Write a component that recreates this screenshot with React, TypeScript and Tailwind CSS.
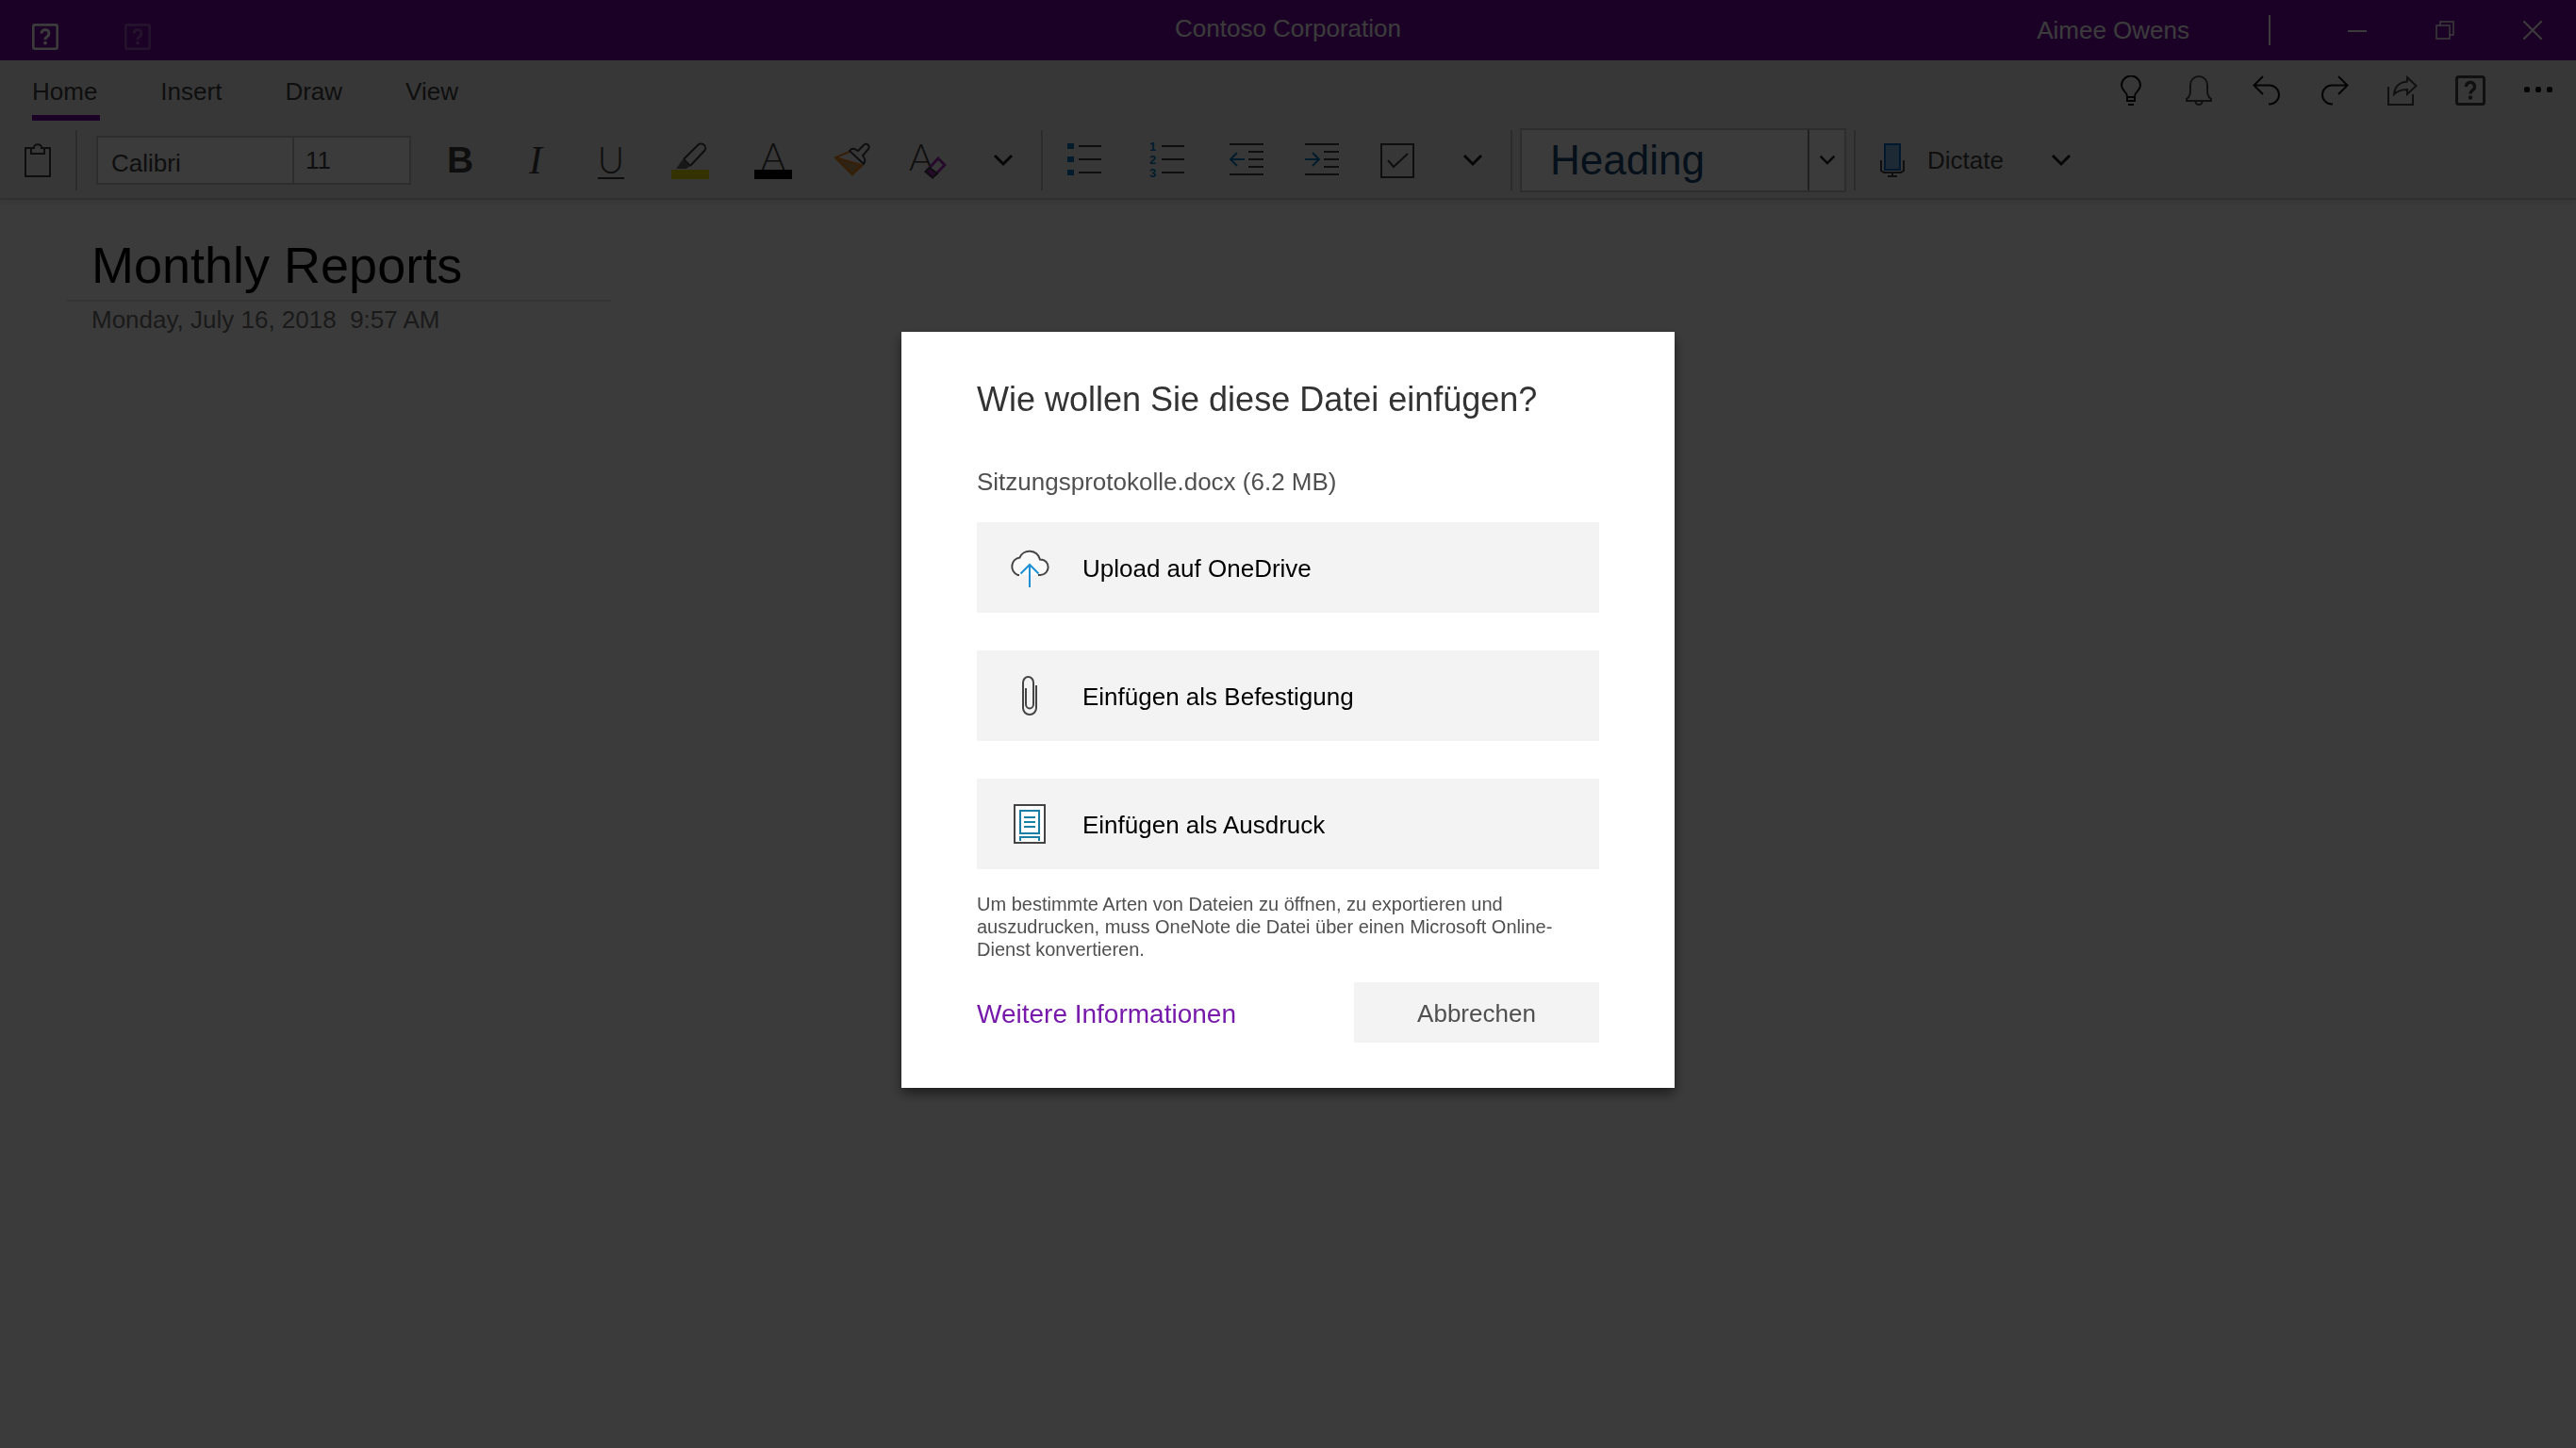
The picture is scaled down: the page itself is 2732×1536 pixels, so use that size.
import React from "react";

type SvgProps = { className?: string };

const stroke = {
  fill: "none",
  stroke: "currentColor",
  strokeWidth: 2,
} as const;

function HelpIcon({ className = "size-8" }: SvgProps) {
  return (
    <svg viewBox="0 0 32 32" className={className} aria-hidden="true">
      <rect x="1.5" y="1.5" width="29" height="29" rx="2" {...stroke} strokeWidth="3" />
      <path d="M11.5 12a4.5 4.5 0 1 1 7 3.6c-1.8 1.2-2.5 2-2.5 4" {...stroke} strokeWidth="3.4" />
      <circle cx="16" cy="23.5" r="2.2" fill="currentColor" />
    </svg>
  );
}

function Chevron({ className = "w-[22px]" }: SvgProps) {
  return (
    <svg viewBox="0 0 22 14" className={`text-[#1c1c1c] ${className}`} aria-hidden="true">
      <path d="M2 2l9 9 9-9" {...stroke} strokeWidth="3" />
    </svg>
  );
}

function ActionIcon({ children }: { children: React.ReactNode }) {
  return (
    <svg viewBox="0 0 32 32" className="size-8" aria-hidden="true" {...stroke}>
      {children}
    </svg>
  );
}

function ToolIcon({ children }: { children: React.ReactNode }) {
  return (
    <svg viewBox="0 0 40 40" className="size-10 overflow-visible" aria-hidden="true" {...stroke}>
      {children}
    </svg>
  );
}

function Divider() {
  return <div className="h-16 w-[2px] shrink-0 bg-[#bcbcbc]" />;
}

function Tool({ label, wide, children }: { label: string; wide?: boolean; children: React.ReactNode }) {
  return (
    <button
      type="button"
      aria-label={label}
      className={`flex h-16 shrink-0 items-center justify-center text-[#3c3c3c] ${wide ? "w-[88px]" : "w-20"}`}
    >
      {children}
    </button>
  );
}

function TitleBar() {
  return (
    <header className="grid h-16 grid-cols-[1fr_auto_1fr] items-center bg-[#7508a6] text-[26px] leading-8 text-white">
      <div className="flex gap-[70px] pt-[13px] pl-[34px]">
        <button type="button" aria-label="Help">
          <HelpIcon className="size-7" />
        </button>
        <button type="button" aria-label="Support" className="opacity-30" disabled>
          <HelpIcon className="size-7" />
        </button>
      </div>
      <h1 className="pb-1">Contoso Corporation</h1>
      <div className="flex items-center justify-end pr-9">
        <span className="pr-[84px]">Aimee Owens</span>
        <div className="h-8 w-[2px] bg-white" />
        <div className="flex gap-[73px] pl-[82px]">
          <button type="button" aria-label="Minimize">
            <svg viewBox="0 0 20 20" className="size-5" {...stroke}>
              <path d="M0 11h20" />
            </svg>
          </button>
          <button type="button" aria-label="Restore">
            <svg viewBox="0 0 20 20" className="size-5" {...stroke}>
              <path d="M1 5h14v14H1zM5 5V1h14v14h-4" strokeWidth="1.5" />
            </svg>
          </button>
          <button type="button" aria-label="Close">
            <svg viewBox="0 0 20 20" className="size-5" {...stroke}>
              <path d="M0 0l20 20M20 0L0 20" />
            </svg>
          </button>
        </div>
      </div>
    </header>
  );
}

const tabs = ["Home", "Insert", "Draw", "View"];

const actions: { label: string; icon: React.ReactNode; soft?: boolean }[] = [
  {
    label: "Tell me",
    icon: (
      <ActionIcon>
        <path d="M12 22c0-4.500-6-5.500-6-11.500a10 10 0 0 1 20 0c0 6-6 7-6 11.500v5h-8zM12 23h8M13 31h6" />
      </ActionIcon>
    ),
  },
  {
    label: "Notifications",
    soft: true,
    icon: (
      <ActionIcon>
        <path d="M3 27v-2c3-2 4-4 4-9v-6a9 9 0 0 1 18 0v6c0 5 1 7 4 9v2zM12.500 28a3.500 3 0 0 0 7 0" />
      </ActionIcon>
    ),
  },
  {
    label: "Undo",
    icon: (
      <ActionIcon>
        <path d="M12 1l-9.500 9.500L12 20M3 10.500h16a10 10 0 0 1 0 20h-1" />
      </ActionIcon>
    ),
  },
  {
    label: "Redo",
    icon: (
      <ActionIcon>
        <path d="M20 1l9.500 9.500L20 20M29 10.500H13a10 10 0 0 0 0 20h1" />
      </ActionIcon>
    ),
  },
  {
    label: "Share",
    soft: true,
    icon: (
      <ActionIcon>
        <path d="M1 12v19h26V20M7 20C8 11 14 7 21 6.500V2l9.500 9L21 20v-5c-6 0-10 1-14 5z" />
      </ActionIcon>
    ),
  },
  { label: "Help", soft: true, icon: <HelpIcon /> },
  {
    label: "More",
    icon: (
      <svg viewBox="0 0 32 32" className="size-8" aria-hidden="true" fill="currentColor">
        <rect x="1" y="12" width="6" height="6" rx="2" />
        <rect x="13" y="12" width="6" height="6" rx="2" />
        <rect x="25" y="12" width="6" height="6" rx="2" />
      </svg>
    ),
  },
];

function TabRow() {
  return (
    <div className="flex h-16 justify-between">
      <nav className="flex gap-16 pl-[34px] text-[26px] text-[#404040]">
        {tabs.map((tab) => (
          <button
            key={tab}
            type="button"
            className={`border-b-6 pt-2 pr-[3px] ${tab === "Home" ? "border-[#7508a6]" : "border-transparent"}`}
          >
            {tab}
          </button>
        ))}
      </nav>
      <div className="flex items-center pr-1">
        {actions.map((a) => (
          <button
            key={a.label}
            type="button"
            aria-label={a.label}
            className={`flex w-[72px] justify-center ${a.soft ? "text-[#484848]" : "text-[#141414]"}`}
          >
            {a.icon}
          </button>
        ))}
      </div>
    </div>
  );
}

function Toolbar() {
  return (
    <div className="flex h-[84px] items-center shadow-[inset_0_-2px_0_#cecece,0_4px_6px_rgba(0,0,0,0.08)]">
      <button type="button" aria-label="Paste" className="px-[26px] text-[#3c3c3c]">
        <svg viewBox="0 0 28 36" className="h-9 w-7" {...stroke}>
          <path d="M7 5H1v30h26V5h-6M7 5v6h14V5h-3c0-5-8-5-8 0z" />
        </svg>
      </button>
      <Divider />
      <div className="ml-5 flex h-13 w-[334px] shrink-0 border-2 border-[#c4c4c4] bg-white text-[26px] text-[#404040]">
        <input
          aria-label="Font"
          defaultValue="Calibri"
          className="w-[208px] border-r-2 border-[#c4c4c4] pt-[6px] pl-[14px] outline-none"
        />
        <input aria-label="Font size" defaultValue="11" className="w-[122px] pl-3 outline-none" />
      </div>
      <div className="w-3" />

      <Tool label="Bold">
        <span className="text-[39px] leading-10 font-bold">B</span>
      </Tool>
      <Tool label="Italic">
        <span className="font-['Liberation_Serif'] text-[42px] leading-10 italic">I</span>
      </Tool>
      <Tool label="Underline">
        <span className="border-b-2 border-current font-[Lato] text-[39px] leading-[38px] font-light">U</span>
      </Tool>
      <Tool label="Highlight" wide>
        <ToolIcon>
          <path d="M13 19L28 4a4.500 4.500 0 0 1 7 6L20 26M13 19l7 7" />
          <path d="M12 19l8 7-4 3H5z" fill="#6a6a6a" stroke="none" />
          <path d="M0 30h40v10H0z" fill="#e2dc00" stroke="none" />
        </ToolIcon>
      </Tool>
      <Tool label="Font color" wide>
        <span className="flex w-10 flex-col items-center border-b-10 border-black font-[Lato] text-[39px] leading-[30px] font-light">
          A
        </span>
      </Tool>
      <Tool label="Format painter">
        <ToolIcon>
          <path d="M17 11L2 17l18 18 11-10" stroke="#e8801f" />
          <path d="M2 17l27 8-9 10z" fill="#c79a5c" stroke="#e8801f" />
          <path d="M17 10q3-4 7-1l2 1 6-6a3 3 0 0 1 5 4l-6 7q4 5 1 9z" />
        </ToolIcon>
      </Tool>
      <Tool label="Clear formatting">
        <span className="relative flex size-10 font-[Lato] text-[39px] leading-8 font-light">
          A
          <svg viewBox="0 0 24 24" className="absolute right-0 bottom-0 size-6" {...stroke}>
            <path d="M15 2l7 7L9 22l-7-6z" stroke="#a02bb8" strokeWidth="3" />
            <path d="M6 12l8 6-5 4-7-6z" fill="#a02bb8" />
          </svg>
        </span>
      </Tool>
      <Tool label="More text formatting">
        <Chevron />
      </Tool>
      <Divider />
      <Tool label="Bulleted list" wide>
        <ToolIcon>
          <path d="M2 5h7M2 19h7M2 33h7" stroke="#0b78bd" strokeWidth="6" />
          <path d="M14 5h24M14 19h24M14 33h24" />
        </ToolIcon>
      </Tool>
      <Tool label="Numbered list" wide>
        <ToolIcon>
          <g fill="#0b78bd" stroke="none" fontFamily="Liberation Sans, sans-serif" fontSize="13" fontWeight="700">
            <text x="1" y="10">1</text>
            <text x="1" y="24">2</text>
            <text x="1" y="38">3</text>
          </g>
          <path d="M14 5h24M14 19h24M14 33h24" />
        </ToolIcon>
      </Tool>
      <Tool label="Decrease indent">
        <ToolIcon>
          <path d="M2 3h36M22 11h16M22 19h16M22 27h16M2 35h36" />
          <path d="M18 19H3M10 12l-7 7 7 7" stroke="#0b78bd" />
        </ToolIcon>
      </Tool>
      <Tool label="Increase indent">
        <ToolIcon>
          <path d="M2 3h36M22 11h16M22 19h16M22 27h16M2 35h36" />
          <path d="M2 19h15M10 12l7 7-7 7" stroke="#0b78bd" />
        </ToolIcon>
      </Tool>
      <Tool label="To-do tag">
        <ToolIcon>
          <path d="M3 3h34v35H3zM10 20l6 7 15-14" />
        </ToolIcon>
      </Tool>
      <Tool label="More paragraph options">
        <Chevron />
      </Tool>
      <Divider />
      <div className="relative mx-2 h-[68px] w-[346px] shrink-0 border-2 border-[#c4c4c4] bg-white">
        <select
          aria-label="Style"
          className="h-full w-full appearance-none pl-[30px] text-[44px] leading-[60px] text-[#16486f] outline-none"
        >
          <option>Heading</option>
        </select>
        <div className="pointer-events-none absolute inset-y-0 right-0 flex w-[39px] items-center justify-center border-l-2 border-[#8c8c8c]">
          <Chevron className="w-[18px]" />
        </div>
      </div>
      <Divider />
      <button type="button" className="flex items-center gap-6 pl-[26px] text-[26px] leading-8 text-[#404040]">
        <svg viewBox="0 0 26 36" className="h-9 w-[26px]" {...stroke}>
          <path d="M1 18v11l3 2h18l3-2V18M13 31v4M8 35h10" />
          <path d="M5 1h16v27H5z" fill="#7fb0e6" stroke="#0a6cc4" />
        </svg>
        Dictate
      </button>
      <button type="button" aria-label="Dictation options" className="ml-[50px]">
        <Chevron />
      </button>
    </div>
  );
}

function Page() {
  return (
    <main className="flex flex-1 flex-col items-start pt-[37px] pl-[71px]">
      <h2 className="min-w-[577px] border-b-2 border-[#dedede] pb-[5px] pl-[26px] text-[54px] leading-16 text-black">
        Monthly Reports
      </h2>
      <p className="mt-[3px] pl-[26px] text-[26px] leading-8 whitespace-pre text-[#737373]">
        {"Monday, July 16, 2018  9:57 AM"}
      </p>
    </main>
  );
}

const options: { label: string; icon: React.ReactNode }[] = [
  {
    label: "Upload auf OneDrive",
    icon: (
      <>
        <path
          d="M11 30H9.500a9 9.500 0 0 1 2-18.500C15 2 30 2.500 33 13.500c12 0 11 16.500 0 16.500h-2"
          fill="#fafafa"
        />
        <path d="M22 43V19M12.500 28.500L22 19l9.500 9.500" stroke="#1e8fd5" />
      </>
    ),
  },
  {
    label: "Einfügen als Befestigung",
    icon: <path d="M18 14v17a4 4.500 0 0 0 8 0V8a5.500 6 0 0 0-11 0v27a7 7 0 0 0 14 0V11" />,
  },
  {
    label: "Einfügen als Ausdruck",
    icon: (
      <>
        <path d="M6 2h32v40H6z" fill="#fff" />
        <g stroke="#1b7fa5">
          <path d="M12 8h20v24H12zM12 40v-4h20v4M16 15h12M16 20h12M16 25h12" />
        </g>
      </>
    ),
  },
];

function InsertDialog() {
  return (
    <div className="fixed inset-0 flex items-center justify-center bg-black/77 pb-[30px]">
      <section
        role="dialog"
        aria-modal="true"
        aria-labelledby="insert-title"
        className="w-[820px] bg-white px-20 pt-[50px] pb-12 text-[#505050] shadow-[0_6px_12px_rgba(0,0,0,0.5)]"
      >
        <h2 id="insert-title" className="text-[36px] leading-11 text-[#333333]">
          Wie wollen Sie diese Datei einfügen?
        </h2>
        <p className="mt-[49px] text-[26px] leading-8">Sitzungsprotokolle.docx (6.2 MB)</p>
        <div className="mt-[27px] flex flex-col gap-10">
          {options.map((o) => (
            <button
              key={o.label}
              type="button"
              className="flex h-24 items-center gap-[34px] bg-[#f3f3f3] pl-[34px] text-[26px] leading-8 text-black"
            >
              <svg viewBox="0 0 44 44" className="size-11 text-[#444444]" aria-hidden="true" {...stroke}>
                {o.icon}
              </svg>
              <span className="pt-[2px]">{o.label}</span>
            </button>
          ))}
        </div>
        <p className="mt-[25px] text-[20px] leading-6">
          Um bestimmte Arten von Dateien zu öffnen, zu exportieren und auszudrucken, muss OneNote die Datei über einen
          Microsoft Online-Dienst konvertieren.
        </p>
        <div className="mt-[23px] flex items-center justify-between">
          <a href="#info" className="pt-1 text-[28px] leading-8 text-[#7719aa]">
            Weitere Informationen
          </a>
          <button type="button" className="h-16 w-[260px] bg-[#f3f3f3] pt-[2px] text-[26px] leading-8">
            Abbrechen
          </button>
        </div>
      </section>
    </div>
  );
}

export default function App() {
  return (
    <div className="flex min-h-screen flex-col bg-white font-['Liberation_Sans',Arial,sans-serif] text-black">
      <TitleBar />
      <div className="bg-[#eeeeee]">
        <TabRow />
        <Toolbar />
      </div>
      <Page />
      <InsertDialog />
    </div>
  );
}
